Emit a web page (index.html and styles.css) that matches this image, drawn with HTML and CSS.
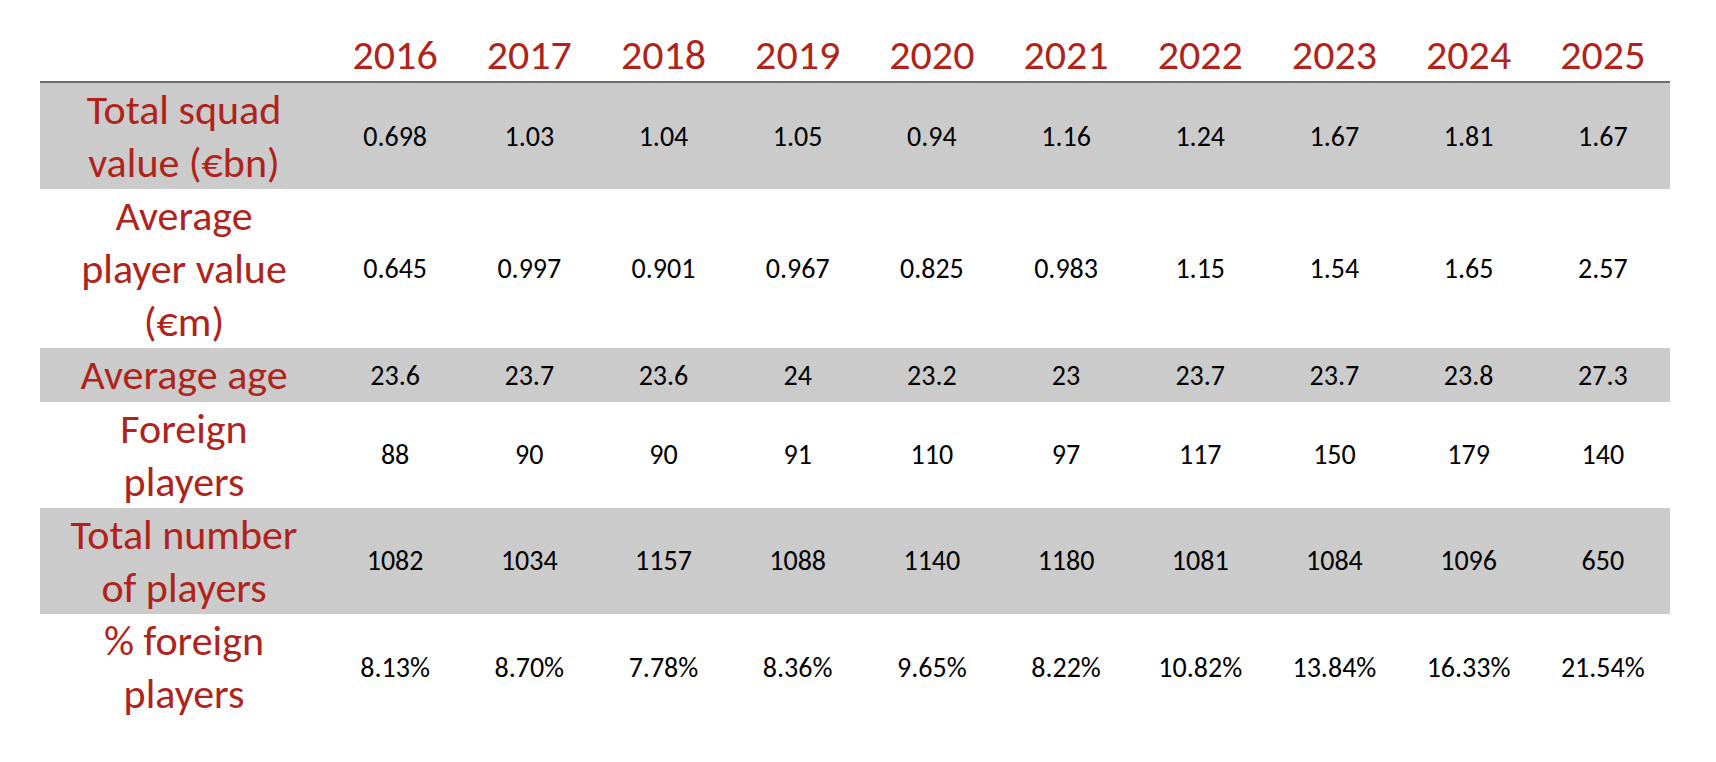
FILE: index.html
```html
<!DOCTYPE html>
<html lang="en">
<head>
<meta charset="utf-8">
<title>Squad statistics 2016–2025</title>
<link rel="stylesheet" href="styles.css">
</head>
<body>
<table class="stats">
  <colgroup>
    <col class="col-label">
    <col span="10" class="col-year">
  </colgroup>
  <thead>
    <tr class="head">
      <th class="corner"></th>
      <th>2016</th><th>2017</th><th>2018</th><th>2019</th><th>2020</th>
      <th>2021</th><th>2022</th><th>2023</th><th>2024</th><th>2025</th>
    </tr>
  </thead>
  <tbody>
    <tr class="shade">
      <th class="label">Total squad<br>value (€bn)</th>
      <td>0.698</td><td>1.03</td><td>1.04</td><td>1.05</td><td>0.94</td>
      <td>1.16</td><td>1.24</td><td>1.67</td><td>1.81</td><td>1.67</td>
    </tr>
    <tr>
      <th class="label">Average<br>player value<br>(€m)</th>
      <td>0.645</td><td>0.997</td><td>0.901</td><td>0.967</td><td>0.825</td>
      <td>0.983</td><td>1.15</td><td>1.54</td><td>1.65</td><td>2.57</td>
    </tr>
    <tr class="shade">
      <th class="label">Average age</th>
      <td>23.6</td><td>23.7</td><td>23.6</td><td>24</td><td>23.2</td>
      <td>23</td><td>23.7</td><td>23.7</td><td>23.8</td><td>27.3</td>
    </tr>
    <tr>
      <th class="label">Foreign<br>players</th>
      <td>88</td><td>90</td><td>90</td><td>91</td><td>110</td>
      <td>97</td><td>117</td><td>150</td><td>179</td><td>140</td>
    </tr>
    <tr class="shade">
      <th class="label">Total number<br>of players</th>
      <td>1082</td><td>1034</td><td>1157</td><td>1088</td><td>1140</td>
      <td>1180</td><td>1081</td><td>1084</td><td>1096</td><td>650</td>
    </tr>
    <tr>
      <th class="label">% foreign<br>players</th>
      <td>8.13%</td><td>8.70%</td><td>7.78%</td><td>8.36%</td><td>9.65%</td>
      <td>8.22%</td><td>10.82%</td><td>13.84%</td><td>16.33%</td><td>21.54%</td>
    </tr>
  </tbody>
</table>
</body>
</html>
```
FILE: styles.css
```css
html, body {
  margin: 0;
  padding: 0;
  background: #ffffff;
}

body {
  font-family: Carlito, Lato, "Open Sans", "Liberation Sans", sans-serif;
}

.stats {
  margin-left: 40px;
  width: 1630px;
  border-collapse: collapse;
  border-spacing: 0;
  table-layout: fixed;
}

.col-label {
  width: 288px;
}

.col-year {
  width: 134.2px;
}

.stats th,
.stats td {
  padding: 0;
  text-align: center;
  vertical-align: middle;
}

.head th {
  padding-top: 28px;
  font-size: 42px;
  font-weight: 400;
  line-height: 53px;
  color: #b0231b;
  border-bottom: 2px solid #6e6e6e;
  vertical-align: bottom;
}

.label {
  font-size: 42px;
  font-weight: 400;
  line-height: 53.1px;
  color: #b0231b;
  white-space: nowrap;
}

.stats td {
  font-size: 28px;
  color: #000000;
}

.shade th,
.shade td {
  background: #cbcbcb;
}
```
